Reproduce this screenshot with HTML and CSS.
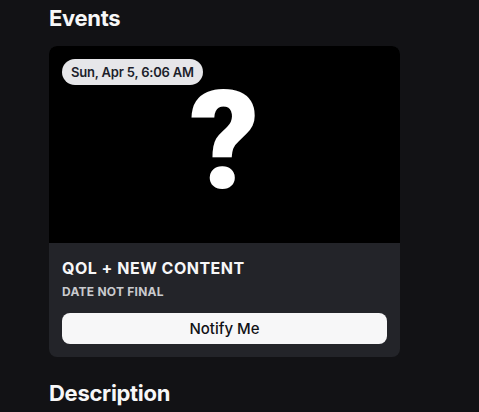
FILE: index.html
```html
<!DOCTYPE html>
<html>
<head>
<meta charset="utf-8">
<link rel="stylesheet" href="styles.css">
</head>
<body>
<main class="page">
  <h2 class="section-title">Events</h2>
  <div class="event-card">
    <div class="event-media">
      <span class="date-pill">Sun, Apr 5, 6:06 AM</span>
      <span class="qmark">?</span>
    </div>
    <div class="event-body">
      <div class="event-title">QOL + NEW CONTENT</div>
      <div class="event-sub">DATE NOT FINAL</div>
      <button class="notify-btn">Notify Me</button>
    </div>
  </div>
  <h2 class="section-title desc">Description</h2>
</main>
</body>
</html>
```
FILE: styles.css
```css
html, body {
  margin: 0;
  padding: 0;
  background: #121215;
  height: 100%;
  overflow: hidden;
}
.page {
  padding: 4px 0 0 49px;
  font-family: Inter, "Noto Sans", sans-serif;
  color: #f7f7f8;
}
.section-title {
  margin: 0;
  font-size: 22px;
  font-weight: 700;
  line-height: 28px;
  letter-spacing: -0.3px;
}
.event-card {
  margin-top: 14px;
  width: 351px;
  border-radius: 8px;
  overflow: hidden;
  background: #232429;
}
.event-media {
  position: relative;
  height: 197px;
  background: #000;
  display: flex;
  align-items: center;
  justify-content: center;
}
.date-pill {
  position: absolute;
  left: 13px;
  top: 13px;
  height: 26px;
  padding: 0 9px 0 9px;
  border-radius: 13px;
  background: #e6e6e9;
  color: #1c1e2b;
  font-size: 13px;
  font-weight: 600;
  line-height: 26px;
  letter-spacing: -0.2px;
}
.qmark {
  color: #fff;
  font-family: Roboto, "Open Sans", sans-serif;
  font-size: 137px;
  font-weight: 900;
  line-height: 1.2;
  margin-top: -6px;
  padding: 0 8px;
}
.event-body {
  padding: 14px 13px 13px;
  display: flex;
  flex-direction: column;
}
.event-title {
  font-size: 16px;
  font-weight: 700;
  line-height: 22px;
  letter-spacing: 0.5px;
}
.event-sub {
  margin-top: 5px;
  font-size: 12px;
  font-weight: 700;
  line-height: 16px;
  letter-spacing: 0.25px;
  color: #c9cace;
}
.notify-btn {
  margin-top: 13px;
  height: 31px;
  border: none;
  border-radius: 8px;
  background: #f7f7f8;
  color: #111216;
  font-family: Inter, "Noto Sans", sans-serif;
  font-size: 15px;
  font-weight: 500;
}
.section-title.desc {
  margin-top: 22px;
}
```
